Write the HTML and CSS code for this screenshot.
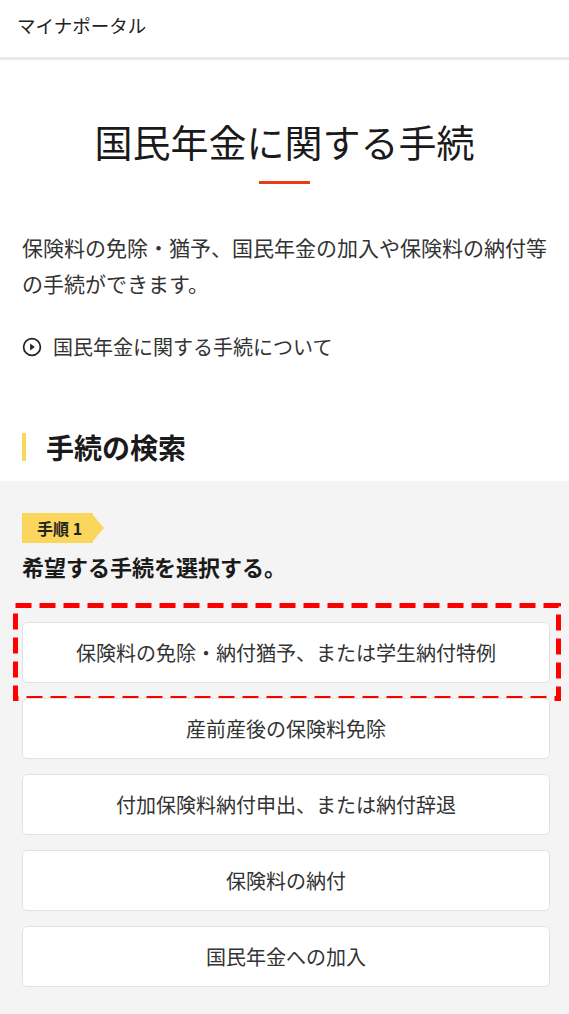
FILE: index.html
```html
<!DOCTYPE html>
<html lang="ja">
<head>
<meta charset="utf-8">
<title>国民年金に関する手続</title>
<link rel="stylesheet" href="styles.css">
</head>
<body>
<header class="site-header">マイナポータル</header>
<main class="main">
  <h1 class="page-title">国民年金に関する手続</h1>
  <div class="title-rule"></div>
  <p class="lead">保険料の免除・猶予、国民年金の加入や保険料の納付等の手続ができます。</p>
  <a class="more-link" href="#">
    <svg class="more-icon" viewBox="0 0 20 20" width="20" height="20" aria-hidden="true">
      <circle cx="10" cy="10" r="8.4" fill="none" stroke="#222" stroke-width="1.7"/>
      <path d="M8.1 6.6 L12.8 10 L8.1 13.4 Z" fill="#222"/>
    </svg>
    <span>国民年金に関する手続について</span>
  </a>
  <h2 class="section-title">手続の検索</h2>
</main>
<section class="search">
  <div class="step-badge">手順 1</div>
  <p class="step-text">希望する手続を選択する。</p>
  <ul class="choice-list">
    <li class="choice highlighted">
      <a class="choice-btn" href="#">保険料の免除・納付猶予、または学生納付特例</a>
      <svg class="highlight-box" viewBox="0 0 548 98" width="548" height="98" aria-hidden="true">
        <rect x="2.5" y="2.5" width="543" height="93" fill="none" stroke="#ff0000" stroke-width="5" stroke-dasharray="16 8"/>
      </svg>
    </li>
    <li class="choice"><a class="choice-btn" href="#">産前産後の保険料免除</a></li>
    <li class="choice"><a class="choice-btn" href="#">付加保険料納付申出、または納付辞退</a></li>
    <li class="choice"><a class="choice-btn" href="#">保険料の納付</a></li>
    <li class="choice"><a class="choice-btn" href="#">国民年金への加入</a></li>
  </ul>
</section>
</body>
</html>
```
FILE: styles.css
```css
* { box-sizing: border-box; }
html, body { margin: 0; padding: 0; }
body {
  font-family: "Noto Sans CJK JP", "Noto Sans", sans-serif;
  color: #222;
  background: #fff;
}
.site-header {
  height: 60px;
  padding: 11px 17px 0;
  font-size: 18.5px;
  line-height: 28px;
  color: #222;
  border-bottom: 3px solid #e9e9e9;
}
.main {
  padding: 0 22px;
}
.page-title {
  margin: 54px 0 0;
  font-size: 38px;
  font-weight: 400;
  line-height: 53px;
  text-align: center;
  color: #1a1a1a;
}
.title-rule {
  width: 51px;
  height: 3px;
  margin: 14px auto 0;
  background: #e63d17;
}
.lead {
  margin: 45px 0 0;
  font-size: 21px;
  line-height: 36px;
  color: #333;
}
.more-link {
  display: flex;
  align-items: center;
  gap: 11px;
  margin-top: 28px;
  font-size: 20px;
  line-height: 36px;
  color: #333;
  text-decoration: none;
}
.more-icon { flex: none; }
.section-title {
  margin: 68px 0 0;
  padding-left: 20px;
  border-left: 4px solid #f9d75c;
  font-size: 28px;
  font-weight: 700;
  line-height: 28px;
  color: #1a1a1a;
}
.search {
  margin-top: 20px;
  padding: 32px 19px 40px 22px;
  background: #f4f4f4;
}
.step-badge {
  position: relative;
  display: inline-block;
  height: 30px;
  padding: 0 11px 0 15px;
  background: #fbd65c;
  font-size: 16px;
  font-weight: 700;
  line-height: 30px;
  color: #222;
}
.step-badge::after {
  content: "";
  position: absolute;
  top: 2px;
  right: -11px;
  border-style: solid;
  border-width: 13px 0 13px 11px;
  border-color: transparent transparent transparent #fbd65c;
}
.step-text {
  margin: 7px 0 0;
  font-size: 22px;
  font-weight: 700;
  line-height: 32px;
  color: #1a1a1a;
}
.choice-list {
  list-style: none;
  margin: 40px 0 0;
  padding: 0;
  display: flex;
  flex-direction: column;
  gap: 15px;
}
.choice { position: relative; }
.choice-btn {
  display: flex;
  align-items: center;
  justify-content: center;
  height: 61px;
  background: #fff;
  border: 1px solid #e2e2e2;
  border-radius: 5px;
  font-size: 20px;
  color: #333;
  text-decoration: none;
}
.highlight-box {
  position: absolute;
  top: -19px;
  left: -9px;
  pointer-events: none;
}
```
